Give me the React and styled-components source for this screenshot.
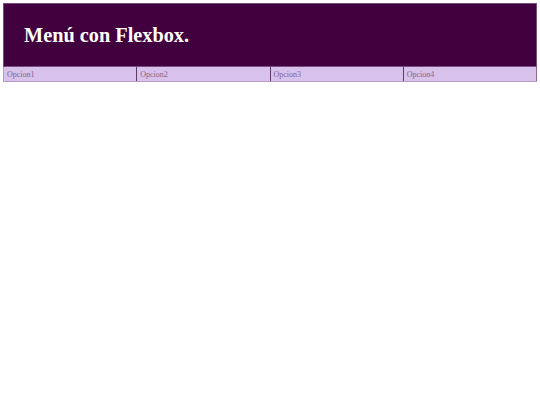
import React from "react";
import styled, { createGlobalStyle } from "styled-components";

const Global = createGlobalStyle`
  html, body { margin: 0; padding: 0; background: #ffffff; }
  body { padding: 3px; font-family: "Liberation Serif", "Times New Roman", serif; }
`;

const Header = styled.header`
  background: #41003e;
  border: 1px solid #7a4d82;
  height: 62px;
  display: flex;
  align-items: center;
  padding: 0 20px;
`;

const Title = styled.h1`
  margin: 0;
  color: #ffffff;
  font-size: 20.3px;
  font-weight: bold;
  font-family: "Liberation Serif", "Times New Roman", serif;
`;

const Nav = styled.nav`
  display: flex;
  background: #d8c2ec;
  border-bottom: 1px solid #b79acb;
`;

const Item = styled.a`
  flex: 1;
  height: 14px;
  display: flex;
  align-items: center;
  padding-left: 3px;
  font-size: 8px;
  color: #83668f;
  border-left: 1px solid #5c3a6a;
  &:first-child { border-left: 1px solid #b79acb; }
  &:last-child { border-right: 1px solid #8a6a9a; }
`;

export default function App() {
  return (
    <>
      <Global />
      <Header>
        <Title>Menú con Flexbox.</Title>
      </Header>
      <Nav>
        <Item>Opcion1</Item>
        <Item>Opcion2</Item>
        <Item>Opcion3</Item>
        <Item>Opcion4</Item>
      </Nav>
    </>
  );
}
